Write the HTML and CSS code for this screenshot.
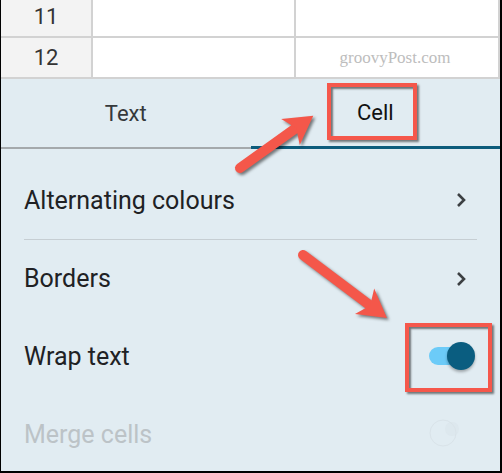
FILE: index.html
```html
<!DOCTYPE html>
<html lang="en">
<head>
    <meta charset="UTF-8">
    <meta name="viewport" content="width=device-width, initial-scale=1.0">
    <title>Cell format</title>
    <link rel="stylesheet" href="styles.css">
</head>
<body>
    <div class="frame">
        <div class="sheet">
            <div class="row">
                <div class="head">11</div>
                <div class="cell"></div>
                <div class="cell"></div>
            </div>
            <div class="row">
                <div class="head">12</div>
                <div class="cell"></div>
                <div class="cell mark">groovyPost.com</div>
            </div>
        </div>

        <div class="panel">
            <div class="tabs">
                <div class="tab">Text</div>
                <div class="tab active">Cell</div>
            </div>
            <div class="list">
                <div class="item">
                    <span>Alternating colours</span>
                    <svg class="chevron" width="12" height="16" viewBox="0 0 12 16"><path d="M3 2 L9 8 L3 14" fill="none" stroke="#3c4043" stroke-width="2.6"/></svg>
                </div>
                <div class="item divided">
                    <span>Borders</span>
                    <svg class="chevron" width="12" height="16" viewBox="0 0 12 16"><path d="M3 2 L9 8 L3 14" fill="none" stroke="#3c4043" stroke-width="2.6"/></svg>
                </div>
                <div class="item">
                    <span>Wrap text</span>
                    <div class="switch on">
                        <div class="track"></div>
                        <div class="thumb"></div>
                    </div>
                </div>
                <div class="item disabled">
                    <span>Merge cells</span>
                    <svg class="ghost" width="46" height="30" viewBox="0 0 46 30"><circle cx="18" cy="14" r="13" fill="none" stroke="#d9e3e9" stroke-width="1"/><circle cx="27" cy="10" r="7" fill="#d9e3e9" opacity="0.5"/></svg>
                </div>
            </div>
        </div>

        <div class="callout callout-tab"></div>
        <div class="callout callout-switch"></div>

        <svg class="arrows" width="502" height="473" viewBox="0 0 502 473">
            <g transform="translate(240 168) rotate(-35.5)">
                <line x1="0" y1="0" x2="72" y2="0" stroke="#f4574a" stroke-width="10" stroke-linecap="round"/>
                <polygon points="90,0 62,-16 69,0 62,16" fill="#f4574a"/>
            </g>
            <g transform="translate(303 255) rotate(36.9)">
                <line x1="0" y1="0" x2="86" y2="0" stroke="#f4574a" stroke-width="10" stroke-linecap="round"/>
                <polygon points="105,0 77,-16 84,0 77,16" fill="#f4574a"/>
            </g>
        </svg>
    </div>
</body>
</html>
```

FILE: styles.css
```css
body {
    margin: 0;
    width: 502px;
    height: 473px;
    box-sizing: border-box;
    border-left: 1px solid #000;
    border-right: 2px solid #000;
    border-bottom: 2px solid #000;
    overflow: hidden;
    font-family: Roboto, "Liberation Sans", sans-serif;
}
.frame {
    position: relative;
    height: 100%;
    background-color: #e1ecf2;
}
.sheet {
    height: 79px;
    overflow: hidden;
    display: flex;
    flex-direction: column;
    justify-content: flex-end;
    background-color: #fff;
}
.row {
    display: grid;
    grid-template-columns: 92px 203px 204px;
    flex: 0 0 41px;
}
.row > div {
    border-right: 2px solid #d2d2d2;
    border-bottom: 2px solid #d2d2d2;
    display: flex;
    align-items: center;
    justify-content: center;
}
.head {
    background-color: #f3f3f3;
    font-size: 22px;
    color: #333;
}
.mark {
    font-family: "Liberation Serif", serif;
    font-size: 17px;
    color: #bdbdbd;
    padding-right: 4px;
}
.tabs {
    display: flex;
    height: 70px;
}
.tab {
    flex: 1;
    display: flex;
    align-items: center;
    justify-content: center;
    font-size: 22px;
    color: #35393c;
    border-bottom: 2px solid #a4a9ac;
    padding-top: 1px;
}
.tab.active {
    color: #111;
    border-bottom: 3px solid #0d5c7c;
    padding-top: 0;
}
.list {
    padding: 12px 23px 0 23px;
}
.item {
    height: 78px;
    display: flex;
    align-items: center;
    justify-content: space-between;
    font-size: 25px;
    color: #202124;
    box-sizing: border-box;
}
.item.divided {
    border-top: 1px solid #c6ced3;
}
.item.disabled {
    color: #bcc3c7;
}
.chevron {
    margin-right: 10px;
}
.switch {
    position: relative;
    width: 46px;
    height: 28px;
    margin-right: 2px;
}
.track {
    position: absolute;
    left: 0;
    top: 5px;
    width: 36px;
    height: 18px;
    border-radius: 9px;
    background-color: #6ccbf8;
}
.thumb {
    position: absolute;
    right: 0;
    top: 0;
    width: 28px;
    height: 28px;
    border-radius: 50%;
    background-color: #0a5d80;
    box-shadow: 0 2px 3px rgba(0, 0, 0, 0.3);
}
.ghost {
    margin-right: 6px;
}
.callout {
    position: absolute;
    border: 4px solid #f5574b;
    box-shadow: 2px 2px 2px rgba(0, 0, 0, 0.5), inset 2px 2px 2px rgba(0, 0, 0, 0.5);
}
.callout-tab {
    left: 326px;
    top: 83px;
    width: 82px;
    height: 49px;
}
.callout-switch {
    left: 404px;
    top: 323px;
    width: 79px;
    height: 61px;
}
.arrows {
    position: absolute;
    left: -1px;
    top: 0;
    filter: drop-shadow(2px 2px 1.5px rgba(0, 0, 0, 0.5));
}
```
